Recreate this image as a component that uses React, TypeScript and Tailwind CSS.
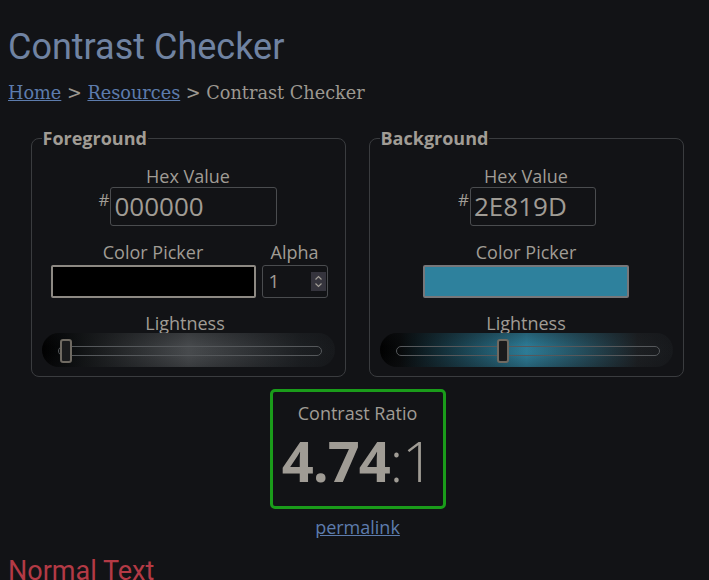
import React from "react";

const sans = { fontFamily: '"Open Sans", "Noto Sans", sans-serif' };

function Slider({ color, thumbLeft }: { color: string; thumbLeft: number }) {
  return (
    <div
      className="relative h-[34px] rounded-full"
      style={{
        background: `linear-gradient(to right, #000 0%, #07090a 7%, ${color} 50%, #1d2023 88%, #17191c 100%)`,
      }}
    >
      <div
        className="absolute inset-0 rounded-full"
        style={{
          background:
            "linear-gradient(to bottom, rgba(18,19,22,0.3) 0%, rgba(18,19,22,0.05) 40%, rgba(18,19,22,0.05) 60%, rgba(18,19,22,0.3) 100%)",
        }}
      />
      <div className="absolute left-[16px] right-[13px] top-[13px] h-[10px] rounded-full border border-[#55585b]" />
      <div
        className="absolute top-[6px] w-[12px] h-[24px] rounded-[3px] border-2 border-[#6f6a62] bg-[#1a1b1d]"
        style={{ left: thumbLeft }}
      />
    </div>
  );
}

function HexRow({ value, width }: { value: string; width: number }) {
  return (
    <div className="flex justify-center items-start">
      <span className="text-[17px] leading-none text-[#a09c95] mt-[4px] mr-[1px]">#</span>
      <div
        className="h-[39px] border border-[#4a4c4f] rounded-[3px] flex items-center px-[3px] text-[26px] text-[#a09c95]"
        style={{ width }}
      >
        {value}
      </div>
    </div>
  );
}

export default function App() {
  return (
    <div className="min-h-[580px] bg-[#121316] px-[8px] overflow-hidden" style={sans}>
      <h1
        className="pt-[26px] text-[36px] leading-[42px] text-[#7083a2]"
        style={{ fontFamily: "Roboto, sans-serif" }}
      >
        Contrast Checker
      </h1>
      <div
        className="mt-[13px] text-[17.7px] leading-[24px] text-[#9c9891]"
        style={{ fontFamily: '"DejaVu Serif", serif' }}
      >
        <a className="underline text-[#5d7cad]">Home</a> &gt;{" "}
        <a className="underline text-[#5d7cad]">Resources</a> &gt; Contrast Checker
      </div>

      <div className="flex justify-center gap-[23px] mt-[22px] ml-[5px]">
        <fieldset className="w-[315px] border border-[#3a3c3f] rounded-[8px] px-[10px] pb-[9px]">
          <legend className="px-[1px] text-[18px] font-bold text-[#a09c95] leading-[22px]">
            Foreground
          </legend>
          <div className="text-center text-[18px] leading-[22px] text-[#a09c95] mt-[16px]">Hex Value</div>
          <HexRow value="000000" width={167} />
          <div className="flex mt-[15px] ml-[9px] gap-[6px]">
            <div className="w-[205px]">
              <div className="text-center text-[18px] leading-[22px] text-[#a09c95]">Color Picker</div>
              <div className="mt-[2px] h-[33px] border-2 border-[#8d8983] rounded-[2px] bg-black" />
            </div>
            <div className="w-[66px]">
              <div className="text-center text-[18px] leading-[22px] text-[#a09c95]">Alpha</div>
              <div className="mt-[2px] h-[33px] border border-[#4a4c4f] rounded-[3px] flex items-center justify-between pl-[6px] text-[19px] text-[#a09c95]">
                1
                <div className="w-[15px] h-[19px] bg-[#35343d] flex items-center justify-center mr-[1px]">
                  <svg width="9" height="13" viewBox="0 0 9 13" fill="none" stroke="#a09c95" strokeWidth="1.2">
                    <path d="M1.5 4.5 L4.5 1.5 L7.5 4.5" />
                    <path d="M1.5 8.5 L4.5 11.5 L7.5 8.5" />
                  </svg>
                </div>
              </div>
            </div>
          </div>
          <div className="text-center text-[18px] leading-[22px] text-[#a09c95] mt-[14px] ml-[-6px]">Lightness</div>
          <div className="mt-[-1px]">
            <Slider color="#4a4d50" thumbLeft={18} />
          </div>
        </fieldset>

        <fieldset className="w-[315px] border border-[#3a3c3f] rounded-[8px] px-[10px] pb-[9px]">
          <legend className="px-[1px] text-[18px] font-bold text-[#a09c95] leading-[22px]">
            Background
          </legend>
          <div className="text-center text-[18px] leading-[22px] text-[#a09c95] mt-[16px]">Hex Value</div>
          <div className="ml-[2px]">
            <HexRow value="2E819D" width={126} />
          </div>
          <div className="mt-[15px] flex justify-center">
            <div className="w-[206px]">
              <div className="text-center text-[18px] leading-[22px] text-[#a09c95]">Color Picker</div>
              <div className="mt-[2px] h-[33px] border-2 border-[#77777a] rounded-[2px] bg-[#2e819d]" />
            </div>
          </div>
          <div className="text-center text-[18px] leading-[22px] text-[#a09c95] mt-[14px]">Lightness</div>
          <div className="mt-[-1px]">
            <Slider color="#2e819d" thumbLeft={117} />
          </div>
        </fieldset>
      </div>

      <div className="flex flex-col items-center mt-[12px] ml-[6px]">
        <div className="w-[176px] h-[120px] border-[3px] border-[#1a9c1a] rounded-[5px] flex flex-col items-center">
          <div className="text-[18px] leading-[22px] text-[#a09c95] mt-[10px]">Contrast Ratio</div>
          <div className="text-[56px] leading-[60px] text-[#a09c95] mt-[6px] tracking-[-1px]">
            <span className="font-bold">4.74</span>
            <span className="font-light">:1</span>
          </div>
        </div>
        <a className="mt-[6px] text-[18px] leading-[24px] underline text-[#5d7cad]">permalink</a>
      </div>

      <div
        className="mt-[16px] text-[27px] leading-[32px] text-[#b33a45]"
        style={{ fontFamily: "Roboto, sans-serif" }}
      >
        Normal Text
      </div>
    </div>
  );
}
